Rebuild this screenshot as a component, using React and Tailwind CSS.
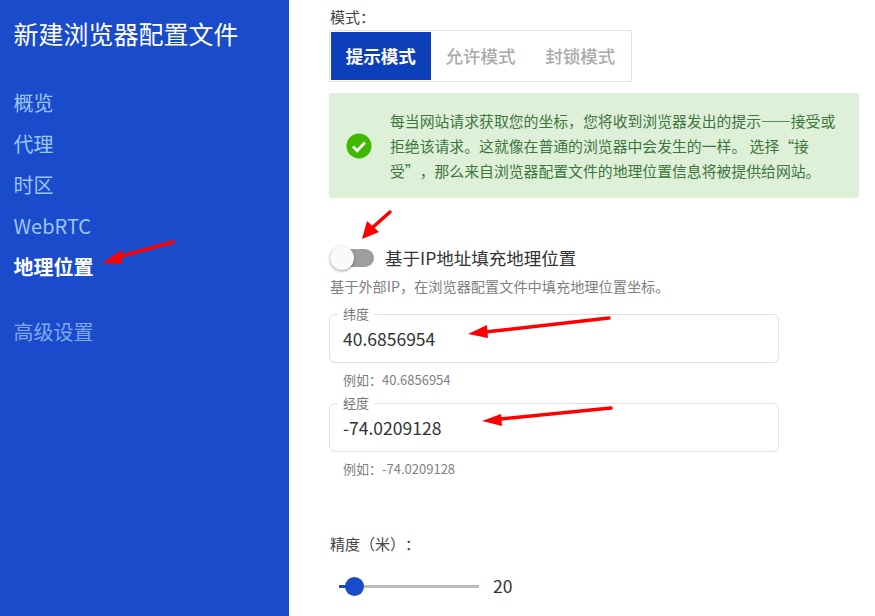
import React from "react";

const font = { fontFamily: '"Noto Sans CJK SC", "Noto Sans", sans-serif' };

function Arrow({ x1, y1, x2, y2, head }) {
  return (
    <svg className="absolute top-0 left-0 pointer-events-none" width="875" height="616">
      <line x1={x1} y1={y1} x2={x2} y2={y2} stroke="#f00" strokeWidth="3.5" strokeLinecap="round" />
      <polygon points={head} fill="#f00" />
    </svg>
  );
}

function NavItem({ children, active }) {
  return (
    <div className={`h-[41px] leading-[41px] text-[20px] ${active ? "text-white font-bold" : "text-[#9cc4ff]"}`}>
      {children}
    </div>
  );
}

function CoordField({ label, value, hint }) {
  return (
    <div>
      <div className="relative w-[450px] h-[48.6px] border border-[#e0e0e0] rounded-[6px] pl-[13px] pt-[11px] text-[17.5px] leading-[26px] text-[#333]">
        <span className="absolute -top-[9px] left-[8px] bg-white px-[5px] text-[13px] leading-[16px] text-[#777]">{label}</span>
        {value}
      </div>
      <div className="pl-[14px] mt-[8.6px] text-[13px] leading-[18px] text-[#808080]">{hint}</div>
    </div>
  );
}

export default function App() {
  return (
    <div lang="zh-CN" className="relative w-[875px] h-[616px] overflow-hidden bg-white flex [text-spacing-trim:space-all]" style={font}>
      <aside className="w-[289px] shrink-0 bg-[#194bca] pl-[13.5px]">
        <h1 className="mt-[16px] text-[25px] leading-[34px] text-white">新建浏览器配置文件</h1>
        <nav className="mt-[32px]">
          <NavItem>概览</NavItem>
          <NavItem>代理</NavItem>
          <NavItem>时区</NavItem>
          <NavItem>WebRTC</NavItem>
          <NavItem active>地理位置</NavItem>
          <div className="mt-[24px] h-[41px] leading-[41px] text-[20px] text-[#7fa8f0]">高级设置</div>
        </nav>
      </aside>

      <main className="flex-1 pl-[40px]">
        <div className="mt-[7px] pl-[1px] text-[15px] leading-[20px] text-[#444]">模式：</div>
        <div className="mt-[3px] flex w-[303px] h-[52px] border border-[#e0e0e0] p-[1px] text-[17.5px] font-medium">
          <div className="w-[100px] flex items-center justify-center bg-[#0d3fbb] text-white font-bold">提示模式</div>
          <div className="w-[100px] flex items-center justify-center text-[#aaa]">允许模式</div>
          <div className="w-[100px] flex items-center justify-center text-[#aaa]">封锁模式</div>
        </div>

        <div className="mt-[11px] w-[530px] h-[105px] flex items-center rounded-[3px] bg-[#dff0d8] pl-[17px]">
          <svg width="26" height="26" viewBox="0 0 26 26" className="shrink-0">
            <circle cx="13" cy="13" r="12.5" fill="#3fb800" />
            <path d="M7 13.5l4.2 4.2L19 9.5" fill="none" stroke="#fff" strokeWidth="2.8" />
          </svg>
          <p className="ml-[18px] w-[452px] text-[14.85px] leading-[25px] text-[#3c763d]">
            每当网站请求获取您的坐标，您将收到浏览器发出的提示——接受或拒绝该请求。这就像在普通的浏览器中会发生的一样。 选择“接受”，那么来自浏览器配置文件的地理位置信息将被提供给网站。
          </p>
        </div>

        <div className="mt-[48px] flex items-center h-[24px]">
          <div className="relative w-[45px] h-[18px]">
            <div className="absolute left-[1px] top-0 w-[44px] h-[18px] rounded-full bg-[#9e9e9e]" />
            <div className="absolute left-[1px] -top-[3px] w-[24px] h-[24px] rounded-full bg-[#fafafa] shadow-[0_1px_3px_rgba(0,0,0,0.4)]" />
          </div>
          <span className="ml-[11px] text-[17.5px] text-[#333]">基于IP地址填充地理位置</span>
        </div>
        <div className="mt-[6px] pl-[1px] text-[14.2px] leading-[20px] text-[#808080]">基于外部IP，在浏览器配置文件中填充地理位置坐标。</div>

        <div className="mt-[18px] flex flex-col gap-[13.8px]">
          <CoordField label="纬度" value="40.6856954" hint="例如：40.6856954" />
          <CoordField label="经度" value="-74.0209128" hint="例如：-74.0209128" />
        </div>

        <div className="mt-[56px] pl-[1px] text-[15px] leading-[20px] text-[#444]">精度（米）：</div>
        <div className="mt-[20px] ml-[10px] flex items-center h-[24px]">
          <div className="relative w-[140px] h-[3px] bg-[#bdbdbd]">
            <div className="absolute left-0 top-0 h-[3px] w-[16px] bg-[#194bca]" />
            <div className="absolute left-[6px] -top-[8px] w-[19px] h-[19px] rounded-full bg-[#194bca]" />
          </div>
          <span className="ml-[14px] text-[17.5px] text-[#333]">20</span>
        </div>
      </main>

      <Arrow x1={173} y1={242} x2={118} y2={257} head="102,263 122,250 122,264" />
      <Arrow x1={390} y1={212} x2={372} y2={228} head="362,239 367,221 379,232" />
      <Arrow x1={609} y1={318} x2={485} y2={332} head="468,334 487,325 488,338" />
      <Arrow x1={611} y1={408} x2={500} y2={419} head="482,421 501,414 502,426" />
    </div>
  );
}
